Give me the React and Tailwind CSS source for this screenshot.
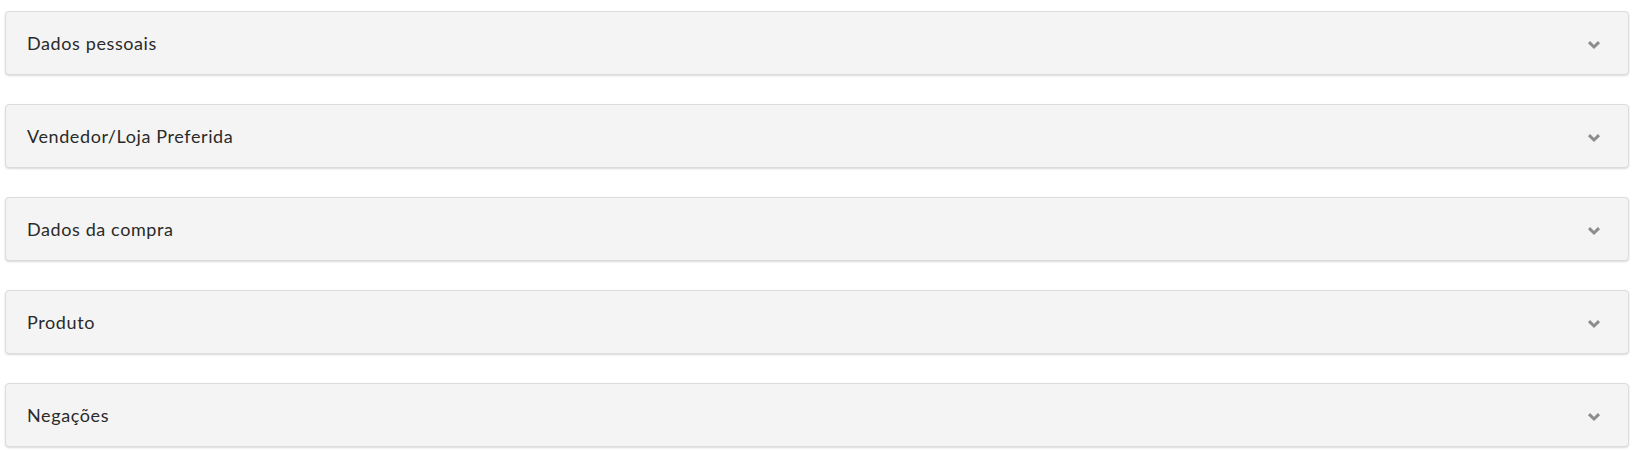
import React from 'react'

const SECTIONS = ['Dados pessoais', 'Vendedor/Loja Preferida', 'Dados da compra', 'Produto', 'Negações']

function Chevron() {
  return (
    <svg width="14" height="10" viewBox="0 0 14 10" className="mt-[3px]">
      <path d="M2 2.2 L7 7 L12 2.2" fill="none" stroke="#8c8c8c" strokeWidth="3" />
    </svg>
  )
}

export default function App() {
  return (
    <div className="min-h-screen bg-white pt-[11px] pl-[5px] pr-[8px]" style={{ fontFamily: 'Lato, "Open Sans", sans-serif' }}>
      {SECTIONS.map((title) => (
        <div
          key={title}
          className="mb-[29px] flex h-[64px] items-center justify-between rounded-[4px] border border-[#dcdcdc] bg-[#f4f4f4] pl-[21px] pr-[27px] shadow-[0_1px_2px_rgba(0,0,0,0.15)]"
        >
          <span className="text-[18px] tracking-[0.6px] text-[#2a2a2a]">{title}</span>
          <Chevron />
        </div>
      ))}
    </div>
  )
}
